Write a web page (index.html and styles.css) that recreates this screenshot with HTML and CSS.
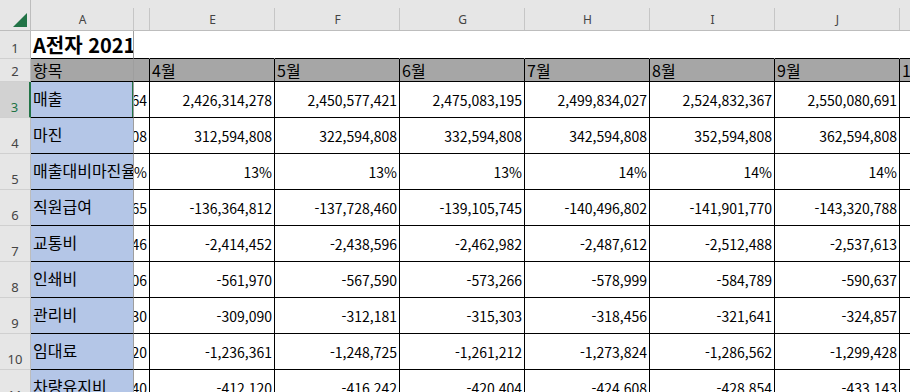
FILE: index.html
```html
<!DOCTYPE html>
<html lang="ko">
<head>
<meta charset="utf-8">
<title>A전자 2021</title>
<link rel="stylesheet" href="styles.css">
</head>
<body>
<div class="sheet">
  <!-- column headers -->
  <div class="corner"><svg width="14" height="14" viewBox="0 0 14 14"><polygon points="14,0 14,14 0,14" fill="#217346"/></svg></div>
  <div class="ch">A</div>
  <div class="ch"></div>
  <div class="ch">E</div>
  <div class="ch">F</div>
  <div class="ch">G</div>
  <div class="ch">H</div>
  <div class="ch">I</div>
  <div class="ch">J</div>
  <div class="ch">K</div>

  <!-- row 1 -->
  <div class="rh">1</div>
  <div class="c a title">A전자 2021년 손익계획</div>
  <div class="c r1"></div><div class="c r1"></div><div class="c r1"></div><div class="c r1"></div><div class="c r1"></div><div class="c r1"></div><div class="c r1"></div><div class="c r1"></div>

  <!-- row 2 -->
  <div class="rh">2</div>
  <div class="c a hd">항목</div>
  <div class="c hd"></div>
  <div class="c hd">4월</div>
  <div class="c hd">5월</div>
  <div class="c hd">6월</div>
  <div class="c hd">7월</div>
  <div class="c hd">8월</div>
  <div class="c hd">9월</div>
  <div class="c hd">10월</div>

  <!-- row 3 -->
  <div class="rh sel">3</div>
  <div class="c a lbl active">매출</div>
  <div class="c n">2,402,291,364</div>
  <div class="c n">2,426,314,278</div>
  <div class="c n">2,450,577,421</div>
  <div class="c n">2,475,083,195</div>
  <div class="c n">2,499,834,027</div>
  <div class="c n">2,524,832,367</div>
  <div class="c n">2,550,080,691</div>
  <div class="c n">2,575,581,498</div>

  <!-- row 4 -->
  <div class="rh">4</div>
  <div class="c a lbl">마진</div>
  <div class="c n">302,594,808</div>
  <div class="c n">312,594,808</div>
  <div class="c n">322,594,808</div>
  <div class="c n">332,594,808</div>
  <div class="c n">342,594,808</div>
  <div class="c n">352,594,808</div>
  <div class="c n">362,594,808</div>
  <div class="c n">372,594,808</div>

  <!-- row 5 -->
  <div class="rh">5</div>
  <div class="c a lbl">매출대비마진율</div>
  <div class="c n">13%</div>
  <div class="c n">13%</div>
  <div class="c n">13%</div>
  <div class="c n">13%</div>
  <div class="c n">14%</div>
  <div class="c n">14%</div>
  <div class="c n">14%</div>
  <div class="c n">14%</div>

  <!-- row 6 -->
  <div class="rh">6</div>
  <div class="c a lbl">직원급여</div>
  <div class="c n">-135,014,665</div>
  <div class="c n">-136,364,812</div>
  <div class="c n">-137,728,460</div>
  <div class="c n">-139,105,745</div>
  <div class="c n">-140,496,802</div>
  <div class="c n">-141,901,770</div>
  <div class="c n">-143,320,788</div>
  <div class="c n">-144,753,996</div>

  <!-- row 7 -->
  <div class="rh">7</div>
  <div class="c a lbl">교통비</div>
  <div class="c n">-2,390,546</div>
  <div class="c n">-2,414,452</div>
  <div class="c n">-2,438,596</div>
  <div class="c n">-2,462,982</div>
  <div class="c n">-2,487,612</div>
  <div class="c n">-2,512,488</div>
  <div class="c n">-2,537,613</div>
  <div class="c n">-2,562,989</div>

  <!-- row 8 -->
  <div class="rh">8</div>
  <div class="c a lbl">인쇄비</div>
  <div class="c n">-556,406</div>
  <div class="c n">-561,970</div>
  <div class="c n">-567,590</div>
  <div class="c n">-573,266</div>
  <div class="c n">-578,999</div>
  <div class="c n">-584,789</div>
  <div class="c n">-590,637</div>
  <div class="c n">-596,543</div>

  <!-- row 9 -->
  <div class="rh">9</div>
  <div class="c a lbl">관리비</div>
  <div class="c n">-306,030</div>
  <div class="c n">-309,090</div>
  <div class="c n">-312,181</div>
  <div class="c n">-315,303</div>
  <div class="c n">-318,456</div>
  <div class="c n">-321,641</div>
  <div class="c n">-324,857</div>
  <div class="c n">-328,106</div>

  <!-- row 10 -->
  <div class="rh">10</div>
  <div class="c a lbl">임대료</div>
  <div class="c n">-1,224,120</div>
  <div class="c n">-1,236,361</div>
  <div class="c n">-1,248,725</div>
  <div class="c n">-1,261,212</div>
  <div class="c n">-1,273,824</div>
  <div class="c n">-1,286,562</div>
  <div class="c n">-1,299,428</div>
  <div class="c n">-1,312,422</div>

  <!-- row 11 -->
  <div class="rh">11</div>
  <div class="c a lbl">차량유지비</div>
  <div class="c n">-408,040</div>
  <div class="c n">-412,120</div>
  <div class="c n">-416,242</div>
  <div class="c n">-420,404</div>
  <div class="c n">-424,608</div>
  <div class="c n">-428,854</div>
  <div class="c n">-433,143</div>
  <div class="c n">-437,474</div>
</div>
</body>
</html>
```

FILE: styles.css
```css
html, body {
  margin: 0;
  padding: 0;
  background: #ffffff;
  overflow: hidden;
  width: 910px;
  height: 392px;
}

.sheet {
  display: grid;
  grid-template-columns: 31px 103px 16px repeat(7, 125px);
  grid-template-rows: 31px 28px 23px repeat(9, 36px);
  width: max-content;
  font-family: "Noto Sans CJK KR", "Noto Sans", sans-serif;
  font-size: 14px;
  color: #000;
}

.sheet > div {
  box-sizing: border-box;
  min-width: 0;
  overflow: hidden;
  white-space: nowrap;
}

/* header strip */
.corner {
  background: #e6e6e6;
  border-bottom: 1px solid #bdbdbd;
  border-right: 1px solid #bdbdbd;
  display: flex;
  align-items: flex-end;
  justify-content: flex-end;
  padding: 0 3px 3px 0;
}
.corner svg { display: block; }

.ch {
  background: #e6e6e6 linear-gradient(#c6c6c6, #c6c6c6) right bottom / 1px 22px no-repeat;
  border-bottom: 1px solid #bdbdbd;
  display: flex;
  align-items: center;
  justify-content: center;
  padding-top: 8px;
  font-family: "Noto Sans", sans-serif;
  font-size: 12px;
  color: #444;
}

.rh {
  background: #e6e6e6;
  border-right: 1px solid #bdbdbd;
  border-bottom: 1px solid #d0d0d0;
  display: flex;
  align-items: flex-end;
  justify-content: center;
  padding-bottom: 1px;
  font-family: "Noto Sans", sans-serif;
  font-size: 13px;
  color: #444;
}
.rh.sel {
  background: #d2d2d2;
  color: #217346;
  border-right: 2px solid #217346;
}

/* cells */
.c {
  background: #fff;
  border-right: 1px solid #000;
  border-bottom: 1px solid #000;
  display: flex;
  align-items: center;
}

.c.r1 {
  border-right-color: transparent;
}

.c.a {
  border-right: 1px solid #9e9e9e;
  padding-left: 2px;
}

.title {
  font-weight: 700;
  font-size: 20px;
}

.hd {
  background: #a6a6a6;
  padding-left: 2px;
  padding-bottom: 1px;
  font-size: 16px;
}
.c.a.hd { background: #a6a6a6; }

.lbl {
  background: #b4c6e7;
  font-size: 16px;
  padding-bottom: 3px;
}
.c.a.lbl { background: #b4c6e7; }

.active {
  box-shadow: inset -1px 0 0 #217346;
}

.n {
  justify-content: flex-end;
  padding-right: 2px;
}
```
